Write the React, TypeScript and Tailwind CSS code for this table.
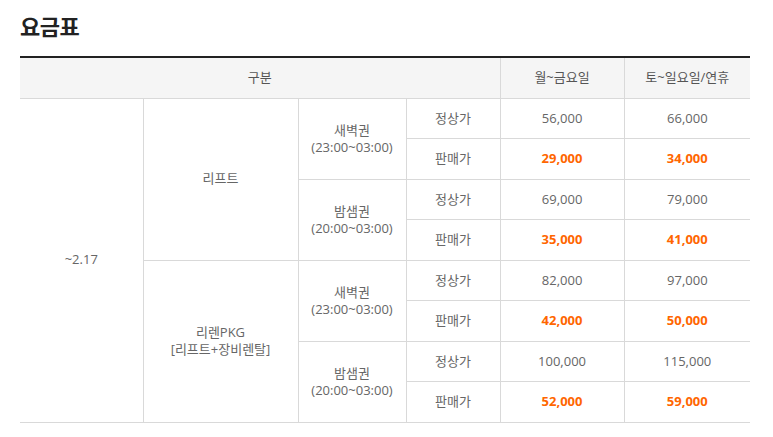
const rows = [
  { pass: "새벽권", time: "(23:00~03:00)", normal: ["56,000", "66,000"], sale: ["29,000", "34,000"] },
  { pass: "밤샘권", time: "(20:00~03:00)", normal: ["69,000", "79,000"], sale: ["35,000", "41,000"] },
  { pass: "새벽권", time: "(23:00~03:00)", normal: ["82,000", "97,000"], sale: ["42,000", "50,000"] },
  { pass: "밤샘권", time: "(20:00~03:00)", normal: ["100,000", "115,000"], sale: ["52,000", "59,000"] },
];

const td = "border border-[#d9d9d9] text-center align-middle h-[40.5px] p-0";

export default function App() {
  return (
    <div
      className="bg-white w-[773px] h-[437px] overflow-hidden px-[20px] pt-[11px] text-[#666] text-[13px]"
      style={{ fontFamily: '"Open Sans", "Noto Sans CJK KR", sans-serif' }}
    >
      <h2 className="text-[22px] font-bold text-[#222] leading-[30px] tracking-[-0.5px]">요금표</h2>
      <table className="mt-[15px] w-[730px] border-collapse table-fixed border-t-2 border-t-[#222]">
        <colgroup>
          <col className="w-[123px]" />
          <col className="w-[155px]" />
          <col className="w-[108px]" />
          <col className="w-[94px]" />
          <col className="w-[124px]" />
          <col className="w-[126px]" />
        </colgroup>
        <thead>
          <tr className="bg-[#f5f5f5]">
            <th colSpan={4} className="border border-[#d9d9d9] border-l-0 border-t-[#222] border-t-2 h-[41px] font-normal text-[#555]">구분</th>
            <th className="border border-[#d9d9d9] border-t-[#222] border-t-2 font-normal text-[#555]">월~금요일</th>
            <th className="border border-[#d9d9d9] border-r-0 border-t-[#222] border-t-2 font-normal text-[#555]">토~일요일/연휴</th>
          </tr>
        </thead>
        <tbody>
          {rows.map((r, i) => (
            <>
              <tr key={`${i}a`}>
                {i === 0 && (
                  <td rowSpan={8} className={`${td} border-l-0`}>~2.17</td>
                )}
                {i === 0 && (
                  <td rowSpan={4} className={td}>리프트</td>
                )}
                {i === 2 && (
                  <td rowSpan={4} className={`${td} leading-[17px]`}>
                    리렌PKG
                    <br />
                    [리프트+장비렌탈]
                  </td>
                )}
                <td rowSpan={2} className={`${td} leading-[17px]`}>
                  {r.pass}
                  <br />
                  {r.time}
                </td>
                <td className={td}>정상가</td>
                <td className={td}>{r.normal[0]}</td>
                <td className={`${td} border-r-0`}>{r.normal[1]}</td>
              </tr>
              <tr key={`${i}b`}>
                <td className={td}>판매가</td>
                <td className={`${td} text-[#ff6600] font-bold`}>{r.sale[0]}</td>
                <td className={`${td} border-r-0 text-[#ff6600] font-bold`}>{r.sale[1]}</td>
              </tr>
            </>
          ))}
        </tbody>
      </table>
    </div>
  );
}
